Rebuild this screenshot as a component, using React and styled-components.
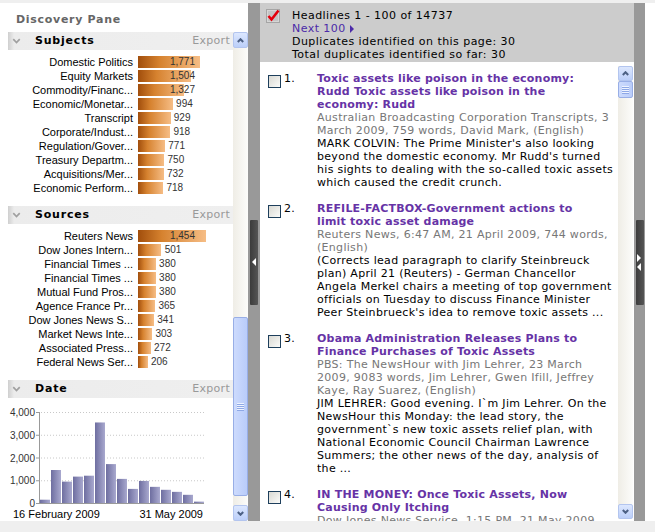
import React from 'react';
import styled, { createGlobalStyle } from 'styled-components';

const GlobalStyle = createGlobalStyle`
  html, body {
    margin: 0;
    padding: 0;
    background: #fff;
  }
  body {
    width: 655px;
    height: 532px;
    overflow: hidden;
    font-family: "DejaVu Sans", Verdana, sans-serif;
  }
`;

const subjects = [
  ['Domestic Politics', 1771],
  ['Equity Markets', 1504],
  ['Commodity/Financ...', 1327],
  ['Economic/Monetar...', 994],
  ['Transcript', 929],
  ['Corporate/Indust...', 918],
  ['Regulation/Gover...', 771],
  ['Treasury Departm...', 750],
  ['Acquisitions/Mer...', 732],
  ['Economic Perform...', 718],
];

const sources = [
  ['Reuters News', 1454],
  ['Dow Jones Intern...', 501],
  ['Financial Times ...', 380],
  ['Financial Times ...', 380],
  ['Mutual Fund Pros...', 380],
  ['Agence France Pr...', 365],
  ['Dow Jones News S...', 341],
  ['Market News Inte...', 303],
  ['Associated Press...', 272],
  ['Federal News Ser...', 206],
];

const dates = [145, 1450, 940, 1160, 1200, 3540, 1710, 1060, 620, 970, 710, 580, 490, 360, 60];

// lines are kept as the result list breaks them
const articles = [
  {
    title: [
      'Toxic assets like poison in the economy:',
      'Rudd Toxic assets like poison in the',
      'economy: Rudd',
    ],
    meta: [
      'Australian Broadcasting Corporation Transcripts, 3',
      'March 2009, 759 words, David Mark, (English)',
    ],
    snippet: [
      "MARK COLVIN: The Prime Minister's also looking",
      "beyond the domestic economy. Mr Rudd's turned",
      'his sights to dealing with the so-called toxic assets',
      'which caused the credit crunch.',
    ],
  },
  {
    title: ['REFILE-FACTBOX-Government actions to', 'limit toxic asset damage'],
    meta: ['Reuters News, 6:47 AM, 21 April 2009, 744 words,', '(English)'],
    snippet: [
      '(Corrects lead paragraph to clarify Steinbreuck',
      'plan) April 21 (Reuters) - German Chancellor',
      'Angela Merkel chairs a meeting of top government',
      'officials on Tuesday to discuss Finance Minister',
      "Peer Steinbrueck's idea to remove toxic assets ...",
    ],
  },
  {
    title: ['Obama Administration Releases Plans to', 'Finance Purchases of Toxic Assets'],
    meta: [
      'PBS: The NewsHour with Jim Lehrer, 23 March',
      '2009, 9083 words, Jim Lehrer, Gwen Ifill, Jeffrey',
      'Kaye, Ray Suarez, (English)',
    ],
    snippet: [
      'JIM LEHRER: Good evening. I`m Jim Lehrer. On the',
      'NewsHour this Monday: the lead story, the',
      'government`s new toxic assets relief plan, with',
      'National Economic Council Chairman Lawrence',
      'Summers; the other news of the day, analysis of',
      'the ...',
    ],
  },
  {
    title: ['IN THE MONEY: Once Toxic Assets, Now', 'Causing Only Itching'],
    meta: ['Dow Jones News Service, 1:15 PM, 21 May 2009,', '598 words, (English)'],
    snippet: [],
  },
];

const Page = styled.div`
  display: flex;
  flex-direction: column;
  width: 655px;
  height: 532px;
  background: #fff;
`;

const Strip = styled.div`
  flex: none;
  height: ${(props) => props.h}px;
  background: #efefef;
`;

const Main = styled.div`
  flex: none;
  display: flex;
  height: 518px;
`;

const LeftPane = styled.div`
  width: 248px;
  display: flex;
  flex-direction: column;
  background: #fff;
`;

const PaneTitle = styled.div`
  height: 29px;
  box-sizing: border-box;
  padding: 10px 0 0 16px;
  font: bold 11px/13px "DejaVu Sans", Verdana, sans-serif;
  letter-spacing: 0.7px;
  color: #666;
`;

const PaneBody = styled.div`
  flex: 1;
  display: flex;
  min-height: 0;
`;

const Sections = styled.div`
  width: 225px;
  margin-left: 8px;
  overflow: hidden;
`;

const SectionHeader = styled.div`
  height: 18px;
  display: flex;
  align-items: center;
  padding: 0 3px 0 4px;
  background: linear-gradient(to right, #cfcfcf, #ececec 6px, #efefef);
`;

const SectionTitle = styled.span`
  flex: 1;
  margin-left: 14px;
  font: bold 11px/18px "DejaVu Sans", Verdana, sans-serif;
  letter-spacing: 0.8px;
  color: #000;
`;

const Export = styled.span`
  font: 11px/18px "DejaVu Sans", Verdana, sans-serif;
  letter-spacing: 0.3px;
  color: #999;
`;

const SectionBody = styled.div`
  padding: 5px 0 11px;
`;

const BarRow = styled.div`
  display: flex;
  align-items: center;
  height: 14px;
`;

const BarLabel = styled.div`
  width: 130px;
  padding-right: 5px;
  box-sizing: border-box;
  text-align: right;
  white-space: nowrap;
  font: 11px/14px "Liberation Sans", Arial, sans-serif;
  color: #000;
`;

const BarTrack = styled.div`
  position: relative;
  flex: 1;
  height: 12px;
`;

const Bar = styled.div`
  height: 12px;
  background: linear-gradient(to right, #a14e0c 0%, #d6822f 35%, #f6bd85 100%);
`;

const BarValue = styled.span`
  position: absolute;
  top: 0;
  left: 0;
  text-align: right;
  font: 10px/12px "Liberation Sans", Arial, sans-serif;
  color: #333;
`;

const ScrollBar = styled.div`
  flex: none;
  width: 15px;
  display: flex;
  flex-direction: column;
  background: linear-gradient(to right, #efede6, #fcfcfa);
  margin: ${(props) => props.margin || '0'};
`;

const ScrollButton = styled.div`
  flex: none;
  height: ${(props) => props.h || 16}px;
  box-sizing: border-box;
  border: 1px solid #b3c5ef;
  border-radius: 2px;
  background: linear-gradient(#dce7fe, #bccff9);
  display: flex;
  align-items: center;
  justify-content: center;
`;

const Track = styled.div`
  flex: 1;
  box-sizing: border-box;
  padding-top: ${(props) => props.offset}px;
`;

const Thumb = styled.div`
  height: ${(props) => props.size}px;
  box-sizing: border-box;
  border: 1px solid #98aee6;
  border-radius: 2px;
  background: linear-gradient(to right, #cddbfd, #b9ccfa);
  display: flex;
  align-items: center;
  justify-content: center;
`;

const Divider = styled.div`
  flex: none;
  width: ${(props) => props.w}px;
  background: #999;
  display: flex;
  align-items: center;
  justify-content: center;
`;

const Tab = styled.div`
  width: 8px;
  height: 85px;
  border-radius: 1px;
  background: linear-gradient(to right, #3c3c3c, #555);
  display: flex;
  flex-direction: column;
  gap: 1px;
  align-items: center;
  justify-content: center;
`;

const RightPane = styled.div`
  width: 374px;
  display: flex;
  flex-direction: column;
`;

const ResultsHeader = styled.div`
  height: 59px;
  box-sizing: border-box;
  padding: 6px 0 0 6px;
  background: #ccc;
  display: flex;
`;

const HeaderLines = styled.div`
  margin-left: 12px;
  font: 11px/13px "DejaVu Sans", Verdana, sans-serif;
  letter-spacing: 0.45px;
  color: #000;
`;

const NextLink = styled.div`
  display: flex;
  align-items: center;
  gap: 4px;
  color: #4b2aa8;
`;

const List = styled.div`
  flex: 1;
  display: flex;
  min-height: 0;
  background: #fff;
`;

const Articles = styled.div`
  flex: 1;
  overflow: hidden;
  padding: 10px 0 0 8px;
`;

const Article = styled.div`
  display: flex;
  margin-bottom: 13px;
  font: 11px/13px "DejaVu Sans", Verdana, sans-serif;
`;

const CheckBox = styled.div`
  flex: none;
  width: 13px;
  height: 13px;
  margin-top: 3px;
  box-sizing: border-box;
  border: 1px solid #1e3f5c;
  background: linear-gradient(135deg, #d9d9d3, #fbfbf9);
`;

const Num = styled.div`
  flex: none;
  width: 33px;
  margin-left: 3px;
  letter-spacing: 0.3px;
  color: #000;
`;

const Content = styled.div`
  flex: 1;
  min-width: 0;
  white-space: nowrap;
`;

const Line = styled.div`
  letter-spacing: ${(props) => (props.bold ? '0.2px' : '0.3px')};
  font-weight: ${(props) => (props.bold ? 'bold' : 'normal')};
  color: ${(props) => props.color};
`;

const Rest = styled.div`
  flex: none;
  width: 10px;
  background: #fff;
`;

const Chevron = ({ down, color = '#4d6185', w = 7, h = 5, sw = 2 }) => (
  <svg width={w} height={h} viewBox="0 0 7 5">
    <polyline
      points={down ? '0.8,1 3.5,3.8 6.2,1' : '0.8,4 3.5,1.2 6.2,4'}
      fill="none"
      stroke={color}
      strokeWidth={sw}
    />
  </svg>
);

const Grip = () => (
  <svg width="7" height="8" viewBox="0 0 7 8">
    {[0, 2, 4, 6].map((y) => (
      <g key={y}>
        <rect x="0" y={y} width="7" height="1" fill="#eef3ff" />
        <rect x="0" y={y + 1} width="7" height="1" fill="#8ea8e6" />
      </g>
    ))}
  </svg>
);

const Scroller = ({ offset, size, margin, bh }) => (
  <ScrollBar margin={margin}>
    <ScrollButton h={bh}><Chevron /></ScrollButton>
    <Track offset={offset}>
      <Thumb size={size}><Grip /></Thumb>
    </Track>
    <ScrollButton h={bh}><Chevron down /></ScrollButton>
  </ScrollBar>
);

const Section = ({ title, children }) => (
  <>
    <SectionHeader>
      <Chevron down color="#a0a0a0" w={9} h={6} sw={1.4} />
      <SectionTitle>{title}</SectionTitle>
      <Export>Export</Export>
    </SectionHeader>
    {children}
  </>
);

const BarList = ({ items, scale }) => (
  <SectionBody>
    {items.map(([label, count], i) => {
      const w = count * scale;
      const numW = Math.min(w + 20, 57);
      return (
        <BarRow key={i}>
          <BarLabel>{label}</BarLabel>
          <BarTrack>
            <Bar style={{ width: `${w}px` }} />
            <BarValue style={{ width: `${numW}px` }}>{count.toLocaleString('en-US')}</BarValue>
          </BarTrack>
        </BarRow>
      );
    })}
  </SectionBody>
);

const DateChart = () => {
  const y0 = 105;
  const k = 91 / 4000;
  const axisX = 31;
  return (
    <svg width="225" height="123" style={{ display: 'block' }}>
      <defs>
        <linearGradient id="dbar" x1="0" x2="1" y1="0" y2="0">
          <stop offset="0" stopColor="#6e6ea0" />
          <stop offset="1" stopColor="#a9a9cf" />
        </linearGradient>
      </defs>
      {[1000, 2000, 3000, 4000].map((v) => (
        <line
          key={v}
          x1={axisX + 2}
          x2={196}
          y1={y0 - v * k + 0.5}
          y2={y0 - v * k + 0.5}
          stroke="#c8c8c8"
          strokeDasharray="1 2"
        />
      ))}
      {[0, 1000, 2000, 3000, 4000].map((v) => (
        <g key={v}>
          <line x1={axisX - 3} x2={axisX} y1={y0 - v * k + 0.5} y2={y0 - v * k + 0.5} stroke="#999" />
          <text
            x={27}
            y={y0 - v * k + 4}
            textAnchor="end"
            fontFamily="Liberation Sans, Arial, sans-serif"
            fontSize="10"
            fill="#333"
          >
            {v.toLocaleString('en-US')}
          </text>
        </g>
      ))}
      <line x1={axisX + 0.5} x2={axisX + 0.5} y1={y0 - 91} y2={y0} stroke="#999" />
      {dates.map((v, i) => (
        <rect
          key={i}
          x={axisX + 1 + i * 11}
          y={y0 - v * k}
          width="10"
          height={v * k}
          fill="url(#dbar)"
        />
      ))}
      <line x1={axisX} x2={196} y1={y0 + 0.5} y2={y0 + 0.5} stroke="#999" />
      <text x="5" y="120" fontFamily="Liberation Sans, Arial, sans-serif" fontSize="11" fill="#000">
        16 February 2009
      </text>
      <text x="195" y="120" textAnchor="end" fontFamily="Liberation Sans, Arial, sans-serif" fontSize="11" fill="#000">
        31 May 2009
      </text>
    </svg>
  );
};

const HeaderCheck = () => (
  <svg width="14" height="14" viewBox="0 0 14 14" style={{ flex: 'none' }}>
    <rect x="0.5" y="0.5" width="13" height="13" fill="#d6d6d6" stroke="#a5a5a5" />
    <rect x="2" y="2" width="10" height="10" fill="#c4c4c4" />
    <polyline points="2.5,7 5.5,10.5 12.5,1.5" fill="none" stroke="#e4000c" strokeWidth="2.6" />
  </svg>
);

const TabArrow = ({ left }) => (
  <svg width="5" height="8" viewBox="0 0 5 8">
    <polygon points={left ? '4,0 4,8 0,4' : '0,0 0,8 4,4'} fill="#fff" />
  </svg>
);

const App = () => (
  <>
    <GlobalStyle />
    <Page>
      <Strip h={3} />
      <Main>
        <LeftPane>
          <PaneTitle>Discovery Pane</PaneTitle>
          <PaneBody>
            <Sections>
              <Section title="Subjects">
                <BarList items={subjects} scale={0.035} />
              </Section>
              <Section title="Sources">
                <BarList items={sources} scale={0.0468} />
              </Section>
              <Section title="Date">
                <DateChart />
              </Section>
            </Sections>
            <Scroller offset={269} size={179} />
          </PaneBody>
        </LeftPane>

        <Divider w={12}>
          <Tab><TabArrow left /></Tab>
        </Divider>

        <RightPane>
          <ResultsHeader>
            <HeaderCheck />
            <HeaderLines>
              <div>Headlines 1 - 100 of 14737</div>
              <NextLink>
                Next 100
                <svg width="4" height="8" viewBox="0 0 4 8">
                  <polygon points="0,0 0,8 4,4" fill="#4b2aa8" />
                </svg>
              </NextLink>
              <div>Duplicates identified on this page: 30</div>
              <div>Total duplicates identified so far: 30</div>
            </HeaderLines>
          </ResultsHeader>
          <List>
            <Articles>
              {articles.map((a, i) => (
                <Article key={i}>
                  <CheckBox />
                  <Num>{i + 1}.</Num>
                  <Content>
                    {a.title.map((t) => <Line key={t} bold color="#6633a6">{t}</Line>)}
                    {a.meta.map((t) => <Line key={t} color="#777">{t}</Line>)}
                    {a.snippet.map((t) => <Line key={t} color="#000">{t}</Line>)}
                  </Content>
                </Article>
              ))}
            </Articles>
            <Scroller offset={0} size={17} margin="4px 1px 2px 0" bh={15} />
          </List>
        </RightPane>

        <Divider w={11}>
          <Tab>
            <TabArrow />
            <TabArrow left />
          </Tab>
        </Divider>
        <Rest />
      </Main>
      <Strip h={11} />
    </Page>
  </>
);

export default App;
